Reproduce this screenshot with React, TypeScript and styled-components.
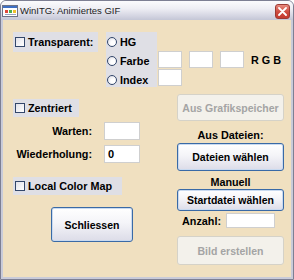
import styled, { createGlobalStyle } from 'styled-components';

const GlobalStyle = createGlobalStyle`
	body {
		margin: 0;
		background: #ffffff;
		font-family: 'Liberation Sans', Arial, sans-serif;
	}
`;

const Window = styled.div`
	width: 294px;
	height: 280px;
	box-sizing: border-box;
	display: flex;
	flex-direction: column;
	background: #c9cbd9;
	border: 1px solid #7d7f93;
	border-radius: 6px 6px 0 0;
	overflow: hidden;
`;

const TitleBar = styled.div`
	height: 19px;
	display: flex;
	align-items: center;
	padding: 0 3px 0 1px;
	background: linear-gradient(#fbfbfd 0%, #eeeef4 40%, #d3d4e1 80%, #c4c6d6 100%);
`;

const TitleText = styled.span`
	flex: 1;
	margin-left: 2px;
	font-size: 9.5px;
	color: #1d1d1d;
	white-space: nowrap;
`;

const CloseButton = styled.div`
	width: 15px;
	height: 15px;
	box-sizing: border-box;
	border: 1px solid #9c3a33;
	border-radius: 3px;
	background: linear-gradient(#e78a7f, #cd4a3e 55%, #c43b30);
	display: flex;
	align-items: center;
	justify-content: center;
	margin-top: 1px;
`;

const Client = styled.div`
	flex: 1;
	margin: 0 2px 2px 2px;
	background: #f0e0c0;
	display: flex;
	flex-direction: column;
	padding: 12px 7px 0 10px;
	font-size: 10.8px;
	font-weight: bold;
	color: #000;
`;

const TopRow = styled.div`
	display: flex;
	align-items: flex-start;
`;

const GroupBox = styled.label<{ $width: number }>`
	width: ${(p) => p.$width}px;
	height: 18px;
	box-sizing: border-box;
	background: #dfdfe5;
	display: flex;
	align-items: center;
	padding-left: 2px;
	gap: 3px;
	white-space: nowrap;
`;

const Check = styled.span`
	width: 10px;
	height: 10px;
	box-sizing: border-box;
	border: 1px solid #33476b;
	background: linear-gradient(135deg, #e2e2ea, #ffffff);
`;

const RadioGroup = styled.div`
	width: 51px;
	height: 55px;
	margin-left: 8px;
	background: #dfdfe5;
	display: flex;
	flex-direction: column;
	padding-top: 3px;
	box-sizing: border-box;
	gap: 5px;
`;

const RadioRow = styled.div`
	display: flex;
	align-items: center;
	gap: 3px;
	height: 14px;
	padding-left: 1px;
`;

const Radio = styled.span`
	width: 10px;
	height: 10px;
	box-sizing: border-box;
	border-radius: 50%;
	border: 1px solid #33476b;
	background: radial-gradient(circle at 65% 65%, #ffffff 30%, #d6d6e0);
`;

const Fields = styled.div`
	display: grid;
	grid-template-columns: 24px 24px 24px auto;
	column-gap: 7px;
	row-gap: 1px;
	margin-top: 19px;
	margin-left: 1px;
	align-items: center;
`;

const TextBox = styled.div<{ $width?: number; $height?: number }>`
	width: ${(p) => p.$width ?? 24}px;
	height: ${(p) => p.$height ?? 17}px;
	box-sizing: border-box;
	background: #ffffff;
	border: 1px solid #cfcfcf;
	font-size: 11px;
	font-weight: bold;
	padding: 2px 0 0 3px;
`;

const RgbLabel = styled.span`
	white-space: nowrap;
`;

const Body = styled.div`
	display: flex;
	margin-top: 7px;
`;

const LeftCol = styled.div`
	width: 164px;
	display: flex;
	flex-direction: column;
	padding-top: 5px;
`;

const FieldGrid = styled.div`
	display: grid;
	grid-template-columns: 79px 36px;
	column-gap: 12px;
	row-gap: 5px;
	margin-top: 5px;
	align-items: center;
`;

const FieldLabel = styled.span`
	text-align: right;
`;

const RightCol = styled.div`
	width: 107px;
	display: flex;
	flex-direction: column;
`;

const Caption = styled.div<{ $top: number }>`
	text-align: center;
	margin-top: ${(p) => p.$top}px;
	height: 13px;
	line-height: 13px;
`;

const Button = styled.button<{ $height: number; $width?: number }>`
	width: ${(p) => p.$width ?? 107}px;
	height: ${(p) => p.$height}px;
	box-sizing: border-box;
	font-family: 'Liberation Sans', Arial, sans-serif;
	font-size: 10.5px;
	font-weight: bold;
	color: #000;
	padding: 0;
	border-radius: 3px;
	border: 1px solid #3a6aa6;
	background: linear-gradient(#ffffff 0%, #f4f4f8 45%, #dcdce8 100%);
	box-shadow: inset 0 0 0 1px #c9daf0;
	&:disabled {
		color: #a4a4a4;
		border-color: #d5d2c8;
		background: #f3f1eb;
		box-shadow: none;
	}
`;

const AnzahlRow = styled.div`
	display: flex;
	align-items: center;
	margin-top: 2px;
	padding-left: 5px;
	gap: 5px;
`;

const TitleIcon = () => (
	<svg width="16" height="12" viewBox="0 0 16 12">
		<rect x="0.5" y="0.5" width="15" height="11" fill="#ffffff" stroke="#6d7387" />
		<rect x="1" y="1" width="14" height="2" fill="#3d6fc4" />
		<rect x="3" y="5" width="3" height="3" fill="#e04a3a" />
		<rect x="7" y="5" width="3" height="3" fill="#4caf50" />
		<rect x="11" y="5" width="3" height="3" fill="#f0c030" />
		<rect x="3" y="9" width="11" height="1" fill="#9aa3c0" />
	</svg>
);

const CloseX = () => (
	<svg width="9" height="9" viewBox="0 0 9 9">
		<path d="M1 1 L8 8 M8 1 L1 8" stroke="#ffffff" strokeWidth="1.8" strokeLinecap="round" />
	</svg>
);

export default function App() {
	return (
		<>
			<GlobalStyle />
			<Window>
				<TitleBar>
					<TitleIcon />
					<TitleText>WinITG: Animiertes GIF</TitleText>
					<CloseButton>
						<CloseX />
					</CloseButton>
				</TitleBar>
				<Client>
					<TopRow>
						<GroupBox $width={85} style={{ height: 20 }}>
							<Check />
							Transparent:
						</GroupBox>
						<RadioGroup>
							<RadioRow>
								<Radio />
								HG
							</RadioRow>
							<RadioRow>
								<Radio />
								Farbe
							</RadioRow>
							<RadioRow>
								<Radio />
								Index
							</RadioRow>
						</RadioGroup>
						<Fields>
							<TextBox />
							<TextBox />
							<TextBox />
							<RgbLabel>R G B</RgbLabel>
							<TextBox />
						</Fields>
					</TopRow>
					<Body>
						<LeftCol>
							<GroupBox $width={66}>
								<Check />
								Zentriert
							</GroupBox>
							<FieldGrid>
								<FieldLabel>Warten:</FieldLabel>
								<TextBox $width={36} $height={18} />
								<FieldLabel>Wiederholung:</FieldLabel>
								<TextBox $width={36} $height={18}>
									0
								</TextBox>
							</FieldGrid>
							<GroupBox $width={109} style={{ marginTop: 14 }}>
								<Check />
								Local Color Map
							</GroupBox>
							<Button $height={35} $width={82} style={{ marginTop: 12, marginLeft: 38 }}>
								Schliessen
							</Button>
						</LeftCol>
						<RightCol>
							<Button $height={27} disabled>
								Aus Grafikspeicher
							</Button>
							<Caption $top={8}>Aus Dateien:</Caption>
							<Button $height={28} style={{ marginTop: 1 }}>
								Dateien wählen
							</Button>
							<Caption $top={5}>Manuell</Caption>
							<Button $height={22}>Startdatei wählen</Button>
							<AnzahlRow>
								Anzahl:
								<TextBox $width={49} $height={15} />
							</AnzahlRow>
							<Button $height={29} disabled style={{ marginTop: 8 }}>
								Bild erstellen
							</Button>
						</RightCol>
					</Body>
				</Client>
			</Window>
		</>
	);
}
